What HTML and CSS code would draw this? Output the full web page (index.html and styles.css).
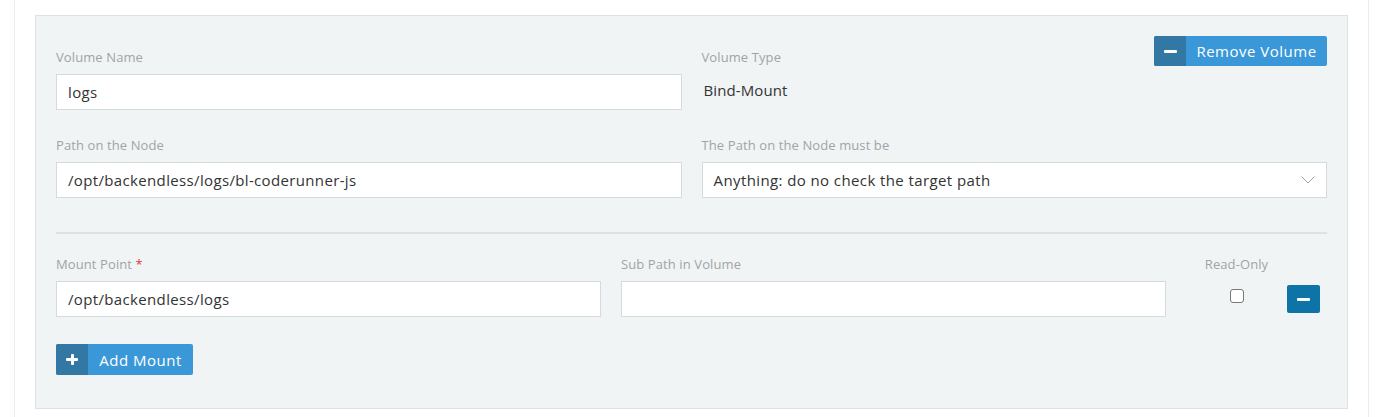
FILE: index.html
```html
<!DOCTYPE html>
<html lang="en">
<head>
<meta charset="utf-8">
<title>Volume</title>
<link rel="stylesheet" href="styles.css">
</head>
<body>
<div class="outer">
  <div class="panel">
    <button class="btn btn-remove" type="button">
      <span class="btn-icon"><span class="minus"></span></span>
      <span class="btn-text">Remove Volume</span>
    </button>

    <div class="grid2">
      <div class="field">
        <label class="label">Volume Name</label>
        <input class="input" type="text" value="logs">
      </div>
      <div class="field">
        <label class="label">Volume Type</label>
        <div class="static">Bind-Mount</div>
      </div>
    </div>

    <div class="grid2 row2">
      <div class="field">
        <label class="label">Path on the Node</label>
        <input class="input" type="text" value="/opt/backendless/logs/bl-coderunner-js">
      </div>
      <div class="field">
        <label class="label">The Path on the Node must be</label>
        <div class="select">
          <span>Anything: do no check the target path</span>
          <svg class="chevron" width="14" height="8" viewBox="0 0 14 8"><path d="M0.5 0.5 L7 7 L13.5 0.5" fill="none" stroke="#9aa3a8" stroke-width="1"/></svg>
        </div>
      </div>
    </div>

    <div class="sep"></div>

    <div class="mount-row">
      <div class="field col-main">
        <label class="label">Mount Point <span class="req">*</span></label>
        <input class="input" type="text" value="/opt/backendless/logs">
      </div>
      <div class="field col-main">
        <label class="label">Sub Path in Volume</label>
        <input class="input" type="text" value="">
      </div>
      <div class="field col-ro">
        <label class="label">Read-Only</label>
        <div class="ro-box"><span class="checkbox"></span></div>
      </div>
      <div class="col-del">
        <button class="btn-del" type="button"><span class="del-bar"></span></button>
      </div>
    </div>

    <button class="btn btn-add" type="button">
      <span class="btn-icon"><span class="plus"></span></span>
      <span class="btn-text">Add Mount</span>
    </button>
  </div>
</div>
</body>
</html>
```

FILE: styles.css
```css
* { box-sizing: border-box; }
html, body { margin: 0; padding: 0; background: #fff; }
body {
  font-family: "Open Sans", "Liberation Sans", sans-serif;
  color: #333;
  height: 417px;
  overflow: hidden;
}
.outer {
  margin: 0 14px;
  border-left: 1px solid #e9edef;
  border-right: 1px solid #e9edef;
  padding: 15px 20px 20px;
  height: 417px;
}
.panel {
  position: relative;
  background: #f0f4f5;
  border: 1px solid #dce2e4;
  padding: 14px 20px 32px;
  height: 394px;
}
.btn {
  display: inline-flex;
  align-items: stretch;
  border: 0;
  padding: 0;
  border-radius: 2px;
  overflow: hidden;
  background: #3a97d8;
  color: #fff;
  font-family: inherit;
  cursor: pointer;
}
.btn-remove {
  position: absolute;
  top: 20px;
  right: 20px;
  height: 30px;
  width: 173px;
}
.btn-icon {
  width: 32px;
  background: #3377a5;
  display: flex;
  align-items: center;
  justify-content: center;
}
.btn-text {
  flex: 1;
  display: flex;
  align-items: center;
  justify-content: center;
  font-size: 15px;
  letter-spacing: 0.5px;
}
.minus {
  display: block;
  width: 13px;
  height: 3px;
  background: #fff;
  border-radius: 1px;
}
.plus {
  position: relative;
  display: block;
  width: 12px;
  height: 11px;
}
.plus::before, .plus::after {
  content: "";
  position: absolute;
  background: #fff;
  border-radius: 1px;
}
.plus::before { left: 0; right: 0; top: 4px; height: 3px; }
.plus::after { top: 0; bottom: 0; left: 4.5px; width: 3px; }

.grid2 {
  display: grid;
  grid-template-columns: 1fr 1fr;
  column-gap: 20px;
  margin-top: 18px;
}
.row2 { margin-top: 26px; }
.field { display: flex; flex-direction: column; }
.label {
  font-size: 13px;
  line-height: 18px;
  color: #a0a4a7;
  margin-bottom: 8px;
  letter-spacing: 0.1px;
}
.req { color: #e0393e; }
.input {
  height: 36px;
  border: 1px solid #d3dbde;
  background: #fff;
  border-radius: 0;
  padding: 0 11px;
  font-family: inherit;
  font-size: 15px;
  letter-spacing: 0.35px;
  color: #333;
  outline: none;
  width: 100%;
}
.static {
  height: 36px;
  line-height: 32px;
  font-size: 15px;
  letter-spacing: 0.1px;
  padding-left: 2px;
  color: #333;
}
.select {
  height: 36px;
  border: 1px solid #d3dbde;
  background: #fff;
  padding: 0 11px;
  display: flex;
  align-items: center;
  justify-content: space-between;
  font-size: 15px;
  letter-spacing: 0.4px;
  color: #333;
}
.sep {
  height: 2px;
  background: #dde3e5;
  margin-top: 34px;
}
.mount-row {
  display: flex;
  margin-top: 21px;
}
.col-main { width: 545px; margin-right: 20px; }
.col-ro { width: 101px; align-items: center; }
.col-ro .label { width: 100%; text-align: center; }
.ro-box {
  height: 36px;
  display: flex;
  align-items: flex-start;
  justify-content: center;
  padding-top: 8px;
}
.checkbox {
  display: block;
  width: 14px;
  height: 14px;
  border: 1px solid #767676;
  border-radius: 3px;
  background: #fff;
}
.col-del {
  width: 33px;
  padding-top: 30px;
}
.btn-del {
  width: 33px;
  height: 28px;
  border: 0;
  padding: 0;
  border-radius: 2px;
  background: #0e73a7;
  display: flex;
  align-items: center;
  justify-content: center;
  cursor: pointer;
}
.del-bar {
  display: block;
  width: 13px;
  height: 3px;
  background: #fff;
  border-radius: 1px;
}
.btn-add {
  margin-top: 27px;
  height: 31px;
  width: 137px;
}
```
